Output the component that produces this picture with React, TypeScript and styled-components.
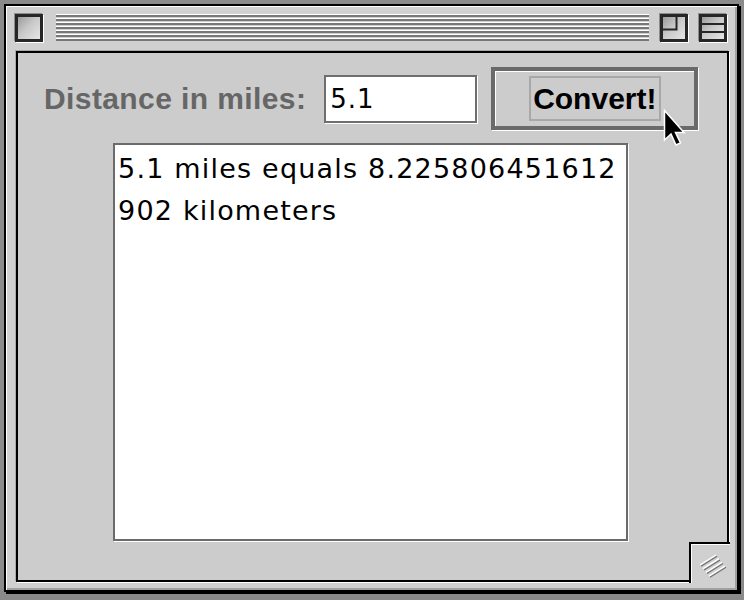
import React from 'react';
import styled, { createGlobalStyle } from 'styled-components';

const GlobalStyle = createGlobalStyle`
  html, body {
    margin: 0;
    padding: 0;
    background: #8a8a8a;
  }
  body {
    width: 744px;
    height: 600px;
    overflow: hidden;
  }
`;

const Window = styled.div`
  position: relative;
  box-sizing: border-box;
  margin: 4px 0 0 4px;
  width: 735px;
  height: 588px;
  border: 2px solid #000;
  background: #d0d0d0;
  box-shadow: 2px 2px 0 #000, inset 1px 1px 0 #fff, inset -2px -2px 0 #a0a0a0;
  display: flex;
  flex-direction: column;
`;

const TitleBar = styled.div`
  height: 45px;
  box-sizing: border-box;
  padding: 8px 10px 0 9px;
  display: flex;
  align-items: flex-start;
`;

const TitleBox = styled.span<{ $gap?: number }>`
  box-sizing: border-box;
  width: 28px;
  height: 28px;
  flex: none;
  display: block;
  border: 3px solid #262626;
  background: linear-gradient(135deg, #9a9a9a 0%, #c8c8c8 45%, #e6e6e6 100%);
  box-shadow: -1px -1px 0 #8c8c8c, 1px 1px 0 #fff;
  margin-left: ${p => p.$gap ?? 0}px;

  svg {
    display: block;
  }
`;

const Stripes = styled.div`
  flex: 1;
  height: 28px;
  margin: 0 11px 0 13px;
  background: repeating-linear-gradient(
    to bottom,
    #ffffff 0 1px,
    #777777 1px 3px,
    #d0d0d0 3px 4px
  );
`;

const Content = styled.div`
  position: relative;
  flex: 1;
  margin: 0 8px 8px 10px;
  border: 2px solid #000;
  background: #cccccc;
  box-shadow: 1px 1px 0 #fff, -1px -1px 0 #a8a8a8;
`;

const FormRow = styled.div`
  display: flex;
  align-items: center;
  height: 63px;
  padding: 14px 0 0 26px;
`;

const Label = styled.span`
  font-family: "Liberation Sans", Arial, sans-serif;
  font-weight: bold;
  font-size: 30px;
  letter-spacing: 0.4px;
  color: #666666;
  margin-right: 18px;
  white-space: nowrap;
`;

const Field = styled.input`
  box-sizing: border-box;
  width: 153px;
  height: 48px;
  margin: 0 14px 0 0;
  padding: 0 4px;
  border: 2px solid #6e6e6e;
  box-shadow: 1px 1px 0 #fff;
  background: #fff;
  outline: none;
  font-family: "DejaVu Sans", Verdana, sans-serif;
  font-size: 26px;
  letter-spacing: 1px;
  color: #000;
`;

const ButtonRing = styled.div`
  position: relative;
  box-sizing: border-box;
  width: 207px;
  height: 63px;
  border: 4px solid #6a6a6a;
  box-shadow: inset 1px 1px 0 #fff, 1px 1px 0 #fff;
  display: flex;
  align-items: center;
  justify-content: center;
`;

const Button = styled.button`
  box-sizing: border-box;
  width: 132px;
  height: 45px;
  padding: 0;
  border: 2px solid #a8a8a8;
  background: #cccccc;
  font-family: "Liberation Sans", Arial, sans-serif;
  font-weight: bold;
  font-size: 30px;
  color: #000;
  cursor: default;
`;

const Cursor = styled.svg`
  position: absolute;
  left: 168px;
  top: 38px;
`;

const Output = styled.div`
  box-sizing: border-box;
  margin: 13px 0 0 95px;
  width: 515px;
  height: 398px;
  padding: 3px 3px;
  border: 2px solid #6b6b6b;
  box-shadow: 1px 1px 0 #fff;
  background: #fff;
  font-family: "DejaVu Sans", Verdana, sans-serif;
  font-size: 27px;
  letter-spacing: 1.2px;
  line-height: 42px;
  word-break: break-all;
  color: #000;
`;

const GrowBox = styled.div`
  position: absolute;
  right: -3px;
  bottom: -3px;
  width: 41px;
  height: 41px;
  box-sizing: border-box;
  border-top: 2px solid #000;
  border-left: 2px solid #000;
  background: #d0d0d0;
  box-shadow: inset 1px 1px 0 #fff;
  padding: 8px 0 0 7px;

  svg {
    display: block;
  }
`;

const miles = 5.1;
const km = miles / 0.62;
const result = `${miles} miles equals ${km} kilometers`;

export default function App() {
  return (
    <>
      <GlobalStyle />
      <Window>
        <TitleBar>
          <TitleBox />
          <Stripes />
          <TitleBox>
            <svg width="22" height="22" viewBox="0 0 22 22">
              <path d="M0 12.5 H13.5 V0" fill="none" stroke="#262626" strokeWidth="2" />
            </svg>
          </TitleBox>
          <TitleBox $gap={11}>
            <svg width="22" height="22" viewBox="0 0 22 22">
              <path d="M0 7 H22 M0 15 H22" fill="none" stroke="#262626" strokeWidth="2" />
            </svg>
          </TitleBox>
        </TitleBar>
        <Content>
          <FormRow>
            <Label>Distance in miles:</Label>
            <Field defaultValue={String(miles)} />
            <ButtonRing>
              <Button>Convert!</Button>
              <Cursor width="24" height="40" viewBox="0 0 24 40">
                <path
                  d="M1.5 1.5 L1.5 31 L8 25 L13 36 L17.5 34 L12.5 23.5 L21 23.5 Z"
                  fill="#000"
                  stroke="#fff"
                  strokeWidth="1.5"
                  strokeLinejoin="miter"
                />
              </Cursor>
            </ButtonRing>
          </FormRow>
          <Output>{result}</Output>
          <GrowBox>
            <svg width="30" height="28" viewBox="0 0 30 28">
              {[0, 1, 2, 3].map(i => (
                <g key={i}>
                  <line x1={2 + 3 * i} y1={13 + 3.7 * i} x2={18 + 3 * i} y2={3 + 3.7 * i}
                    stroke="#fff" strokeWidth="1.4" />
                  <line x1={3 + 3 * i} y1={14.2 + 3.7 * i} x2={19 + 3 * i} y2={4.2 + 3.7 * i}
                    stroke="#707070" strokeWidth="1.2" />
                </g>
              ))}
            </svg>
          </GrowBox>
        </Content>
      </Window>
    </>
  );
}
